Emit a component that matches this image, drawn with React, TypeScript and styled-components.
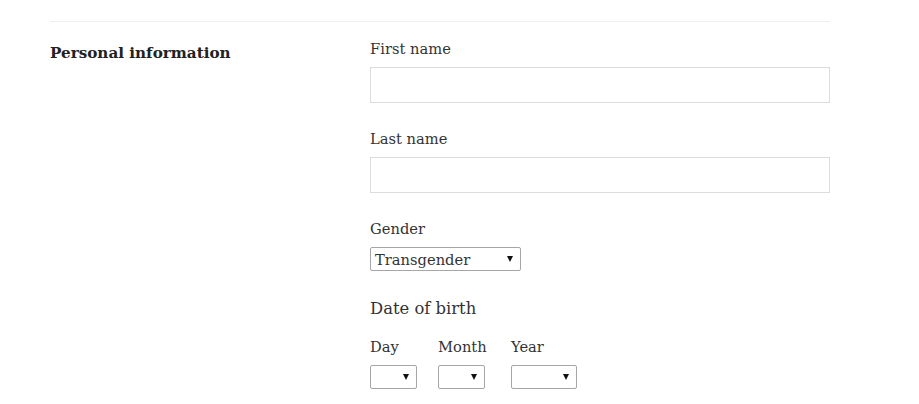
import React from "react";
import styled, { createGlobalStyle } from "styled-components";

const Global = createGlobalStyle`
  html, body { margin: 0; padding: 0; background: #fff; }
  body { font-family: "DejaVu Serif", Georgia, serif; color: #333; }
`;

const Page = styled.div`
  padding: 21px 0 0 50px;
  width: 780px;
`;

const Section = styled.section`
  border-top: 1px solid #efefef;
  display: grid;
  grid-template-columns: 320px 460px;
  padding-top: 16px;
`;

const Heading = styled.h2`
  margin: 0;
  padding-top: 4px;
  font-size: 15.2px;
  font-weight: bold;
  line-height: 22px;
  color: #222;
`;

const Fields = styled.div`
  display: flex;
  flex-direction: column;
`;

const Field = styled.div`
  display: flex;
  flex-direction: column;
  margin-bottom: 25px;
`;

const Label = styled.label`
  font-size: 14.7px;
  line-height: 22px;
  color: #333;
  margin-bottom: 7px;
`;

const TextInput = styled.input`
  box-sizing: border-box;
  width: 460px;
  height: 36px;
  border: 1px solid #dcdcdc;
  border-radius: 0;
  padding: 0 8px;
  font: inherit;
  outline: none;
`;

const SelectBox = styled.div<{ $w: number }>`
  position: relative;
  box-sizing: border-box;
  width: ${(p) => p.$w}px;
  height: 24px;
  border: 1px solid #a6a6a6;
  border-radius: 2px;
  background: #fff;
  display: flex;
  align-items: center;
  padding: 0 4px;
  font-size: 14.7px;
  color: #333;
`;

const Arrow = styled.span`
  position: absolute;
  right: 7px;
  top: 50%;
  margin-top: -3px;
  width: 0;
  height: 0;
  border-left: 3.5px solid transparent;
  border-right: 3.5px solid transparent;
  border-top: 6px solid #111;
`;

const SubHeading = styled.div`
  font-size: 16.4px;
  line-height: 24px;
  color: #333;
  margin-top: 1px;
  margin-bottom: 15px;
`;

const DateRow = styled.div`
  display: grid;
  grid-template-columns: 47px 52px 66px;
  column-gap: 21px;
  align-items: start;
`;

const DateCol = styled.div`
  display: flex;
  flex-direction: column;
`;

function Select({ w, value }: { w: number; value?: string }) {
  return (
    <SelectBox $w={w}>
      {value}
      <Arrow />
    </SelectBox>
  );
}

export default function App() {
  return (
    <>
      <Global />
      <Page>
        <Section>
          <Heading>Personal information</Heading>
          <Fields>
            <Field>
              <Label>First name</Label>
              <TextInput />
            </Field>
            <Field>
              <Label>Last name</Label>
              <TextInput />
            </Field>
            <Field>
              <Label>Gender</Label>
              <Select w={151} value="Transgender" />
            </Field>
            <SubHeading>Date of birth</SubHeading>
            <DateRow>
              <DateCol>
                <Label>Day</Label>
                <Select w={47} />
              </DateCol>
              <DateCol>
                <Label>Month</Label>
                <Select w={47} />
              </DateCol>
              <DateCol>
                <Label>Year</Label>
                <Select w={66} />
              </DateCol>
            </DateRow>
          </Fields>
        </Section>
      </Page>
    </>
  );
}
